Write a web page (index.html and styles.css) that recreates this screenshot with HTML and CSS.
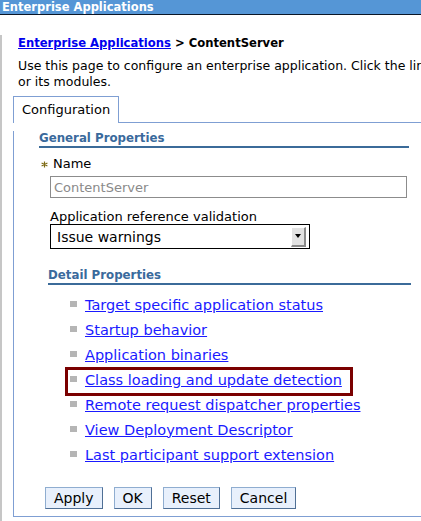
FILE: index.html
```html
<!DOCTYPE html>
<html lang="en">
<head>
<meta charset="utf-8">
<title>Enterprise Applications</title>
<link rel="stylesheet" href="styles.css">
</head>
<body>
<div class="titlebar">Enterprise Applications</div>
<div class="page">
  <div class="breadcrumb"><a href="#">Enterprise Applications</a> &gt; ContentServer</div>
  <p class="intro">Use this page to configure an enterprise application. Click the links to access pages for further configuring of the application<br>or its modules.</p>

  <div class="tabs">
    <div class="tab">Configuration</div>
    <div class="tab-fill"></div>
  </div>

  <div class="panel">
    <h2 class="section general">General Properties</h2>

    <div class="field">
      <div class="label"><svg class="req" width="7" height="7" viewBox="0 0 7 7"><path d="M3.5 0.5V6.5M0.6 2L6.4 5M0.6 5L6.4 2" stroke="#7d6a14" stroke-width="1.2"/></svg>Name</div>
      <input class="text-input" type="text" value="ContentServer" readonly>
    </div>

    <div class="field">
      <div class="label plain">Application reference validation</div>
      <div class="select">
        <span class="select-value">Issue warnings</span>
        <span class="select-btn"><span class="arrow"></span></span>
      </div>
    </div>

    <h2 class="section detail">Detail Properties</h2>
    <ul class="links">
      <li><a href="#">Target specific application status</a></li>
      <li><a href="#">Startup behavior</a></li>
      <li><a href="#">Application binaries</a></li>
      <li class="marked"><a href="#">Class loading and update detection</a></li>
      <li><a href="#">Remote request dispatcher properties</a></li>
      <li><a href="#">View Deployment Descriptor</a></li>
      <li><a href="#">Last participant support extension</a></li>
    </ul>

    <div class="buttons">
      <button type="button">Apply</button>
      <button type="button">OK</button>
      <button type="button">Reset</button>
      <button type="button">Cancel</button>
    </div>
  </div>
</div>
</body>
</html>
```
FILE: styles.css
```css
html, body {
  margin: 0;
  padding: 0;
  background: #fff;
  overflow: hidden;
}

body {
  font-family: "DejaVu Sans", Verdana, sans-serif;
  color: #000;
  width: 421px;
  height: 521px;
}

/* window title strip */
.titlebar {
  height: 14px;
  line-height: 14px;
  background: #5596d6;
  border-bottom: 1px solid #0b1626;
  color: #fff;
  font-weight: bold;
  font-size: 11.5px;
  padding-left: 2px;
  white-space: nowrap;
}

.page {
  border-left: 2px solid #c6c6c6;
  padding-left: 11px;
  height: 506px;
  width: 900px;
}

.breadcrumb {
  margin: 20px 0 0 5px;
  font-size: 11.6px;
  font-weight: bold;
  line-height: 16px;
  white-space: nowrap;
}

.breadcrumb a {
  color: #0000ee;
}

.intro {
  margin: 7px 0 0 5px;
  font-size: 12.5px;
  line-height: 16px;
  white-space: nowrap;
}

/* tab strip */
.tabs {
  display: flex;
  margin-top: 6px;
}

.tab {
  border: 1px solid #7f9fd3;
  border-bottom: none;
  padding: 0 8px;
  height: 26px;
  line-height: 25px;
  font-size: 13px;
  width: 88px;
}

.tab-fill {
  flex: 1;
  border-bottom: 1px solid #7f9fd3;
}

.panel {
  border-left: 1px solid #7f9fd3;
  border-bottom: 1px solid #7f9fd3;
  padding: 0 0 7px 0;
}

.section {
  margin: 0;
  font-size: 11.8px;
  font-weight: bold;
  color: #3a6a9c;
  line-height: 15px;
  border-bottom: 2px solid #3b6b99;
}

.section.general {
  margin: 8px 0 0 25px;
  width: 370px;
}

.section.detail {
  margin: 19px 0 0 34px;
  width: 363px;
}

.field {
  margin-left: 36px;
}

.label {
  font-size: 13px;
  line-height: 16px;
  margin-top: 8px;
  display: flex;
  align-items: center;
}

.label .req {
  margin: 1px 5px 0 -9px;
}

.label.plain {
  line-height: 14px;
  margin-top: 12px;
}

.text-input {
  display: block;
  box-sizing: border-box;
  margin-top: 4px;
  width: 357px;
  height: 22px;
  border: 1px solid #8c8c8c;
  padding: 0 3px;
  font-family: inherit;
  font-size: 13px;
  color: #8a8a8a;
  outline: none;
}

.select {
  box-sizing: border-box;
  width: 260px;
  height: 25px;
  border: 1px solid #000;
  display: flex;
  align-items: center;
  padding: 0 3px 0 6px;
}

.select-value {
  flex: 1;
  font-size: 14px;
}

.select-btn {
  box-sizing: border-box;
  width: 15px;
  height: 20px;
  background: #e2e2e2;
  border-top: 1px solid #fff;
  border-left: 1px solid #fff;
  border-right: 2px solid #8a8a8a;
  border-bottom: 2px solid #8a8a8a;
  display: flex;
  align-items: center;
  justify-content: center;
}

.arrow {
  width: 0;
  height: 0;
  border-left: 3px solid transparent;
  border-right: 3px solid transparent;
  border-top: 4px solid #000;
}

.links {
  list-style: none;
  margin: 7px 0 0 0;
  padding: 0 0 0 53px;
}

.links li {
  position: relative;
  display: flex;
  align-items: center;
  width: max-content;
  height: 25px;
  padding-left: 3px;
  font-size: 14.5px;
}

.links li::before {
  content: "";
  width: 7px;
  height: 6px;
  background: #b5b5b5;
  margin-right: 8px;
  margin-top: -2px;
}

.links a {
  color: #1a1aff;
}

/* highlight frame around one entry */
.links li.marked::after {
  content: "";
  position: absolute;
  left: -2px;
  right: -11px;
  top: 0;
  bottom: -4px;
  border: 3px solid #7a0000;
}

.buttons {
  display: flex;
  gap: 11px;
  margin: 20px 0 0 31px;
}

.buttons button {
  height: 22px;
  padding: 0 8px;
  font-family: inherit;
  font-size: 14px;
  color: #000;
  background: #e8f0fc;
  border: 1px solid #8fadd0;
  border-right-color: #4f6f95;
  border-bottom-color: #4f6f95;
  border-radius: 0;
}
```
